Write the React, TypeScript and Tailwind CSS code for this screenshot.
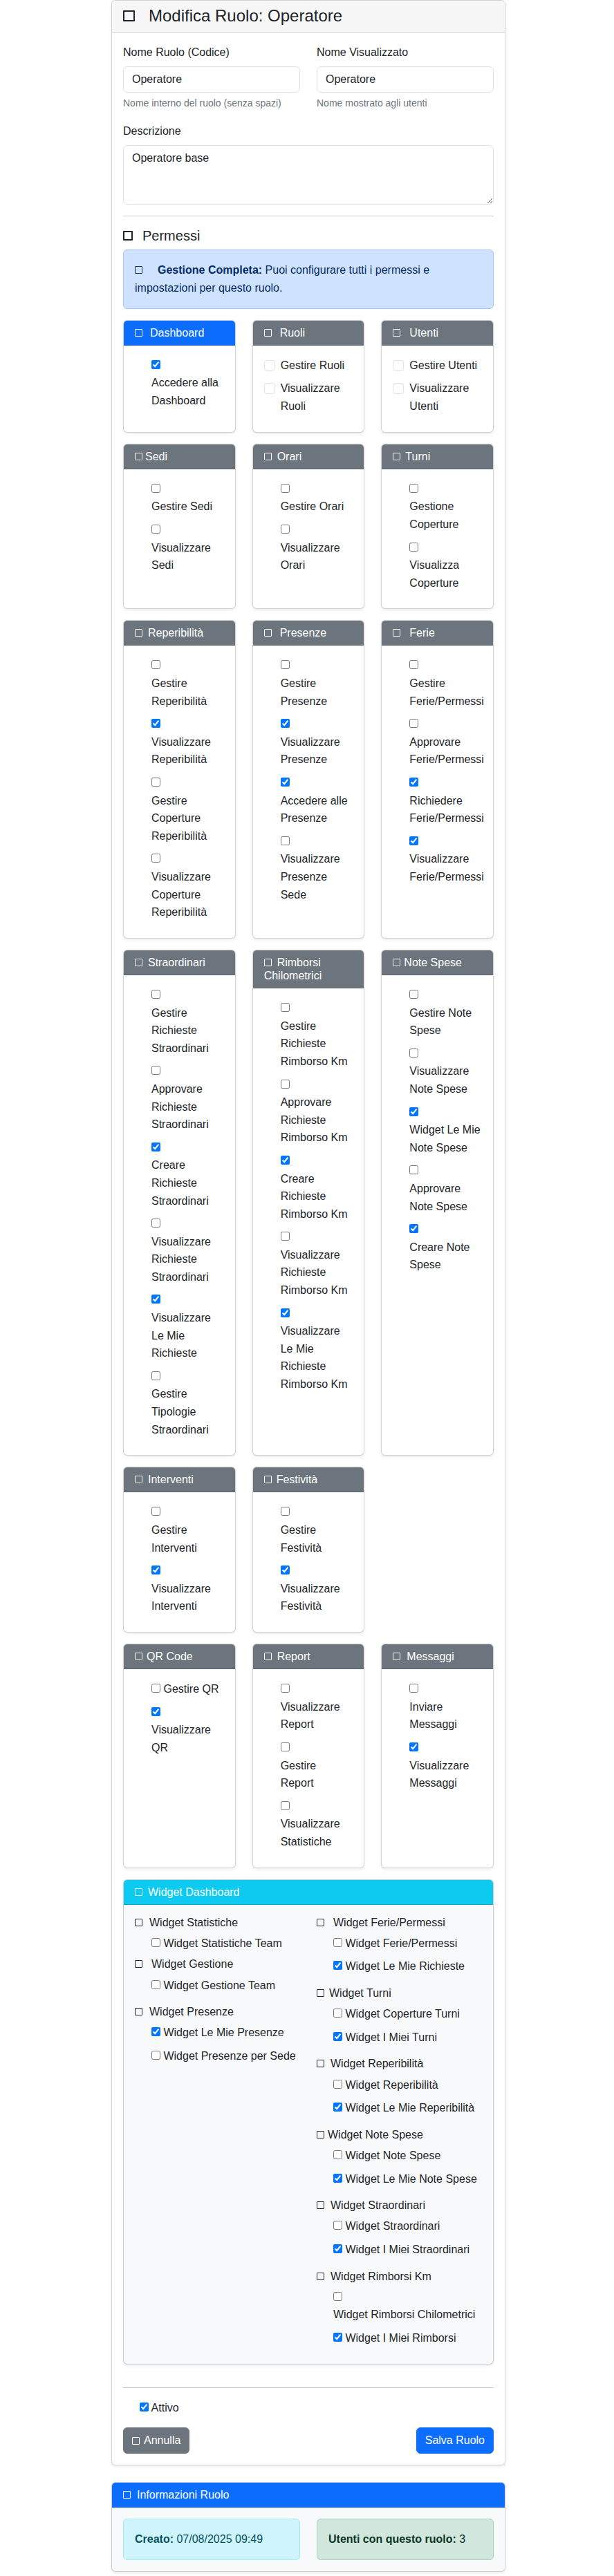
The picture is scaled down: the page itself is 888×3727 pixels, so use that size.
import React from 'react';

type Item = { label: string; checked?: boolean };
type PermCard = {
  title: string;
  gap: string;
  primary?: boolean;
  bs?: boolean;
  items: Item[];
};
type WidgetGroup = { title: string; gap: string; pb: string; items: Item[] };

const Tofu = ({ className = 'w-[11px] h-[11px] border-[1.5px]' }: { className?: string }) => (
  <span className={`inline-block border-current rounded-[1px] ${className}`} />
);

const cards: (PermCard | null)[] = [
  { title: 'Dashboard', gap: 'ml-[11px]', primary: true, items: [{ label: 'Accedere alla Dashboard', checked: true }] },
  { title: 'Ruoli', gap: 'ml-[12px]', bs: true, items: [{ label: 'Gestire Ruoli' }, { label: 'Visualizzare Ruoli' }] },
  { title: 'Utenti', gap: 'ml-[13px]', bs: true, items: [{ label: 'Gestire Utenti' }, { label: 'Visualizzare Utenti' }] },
  { title: 'Sedi', gap: 'ml-[4px]', items: [{ label: 'Gestire Sedi' }, { label: 'Visualizzare Sedi' }] },
  { title: 'Orari', gap: 'ml-[8px]', items: [{ label: 'Gestire Orari' }, { label: 'Visualizzare Orari' }] },
  { title: 'Turni', gap: 'ml-[7px]', items: [{ label: 'Gestione Coperture' }, { label: 'Visualizza Coperture' }] },
  {
    title: 'Reperibilità',
    gap: 'ml-[8px]',
    items: [
      { label: 'Gestire Reperibilità' },
      { label: 'Visualizzare Reperibilità', checked: true },
      { label: 'Gestire Coperture Reperibilità' },
      { label: 'Visualizzare Coperture Reperibilità' },
    ],
  },
  {
    title: 'Presenze',
    gap: 'ml-[12px]',
    items: [
      { label: 'Gestire Presenze' },
      { label: 'Visualizzare Presenze', checked: true },
      { label: 'Accedere alle Presenze', checked: true },
      { label: 'Visualizzare Presenze Sede' },
    ],
  },
  {
    title: 'Ferie',
    gap: 'ml-[13px]',
    items: [
      { label: 'Gestire Ferie/Permessi' },
      { label: 'Approvare Ferie/Permessi' },
      { label: 'Richiedere Ferie/Permessi', checked: true },
      { label: 'Visualizzare Ferie/Permessi', checked: true },
    ],
  },
  {
    title: 'Straordinari',
    gap: 'ml-[8px]',
    items: [
      { label: 'Gestire Richieste Straordinari' },
      { label: 'Approvare Richieste Straordinari' },
      { label: 'Creare Richieste Straordinari', checked: true },
      { label: 'Visualizzare Richieste Straordinari' },
      { label: 'Visualizzare Le Mie Richieste', checked: true },
      { label: 'Gestire Tipologie Straordinari' },
    ],
  },
  {
    title: 'Rimborsi Chilometrici',
    gap: 'ml-[8px]',
    items: [
      { label: 'Gestire Richieste Rimborso Km' },
      { label: 'Approvare Richieste Rimborso Km' },
      { label: 'Creare Richieste Rimborso Km', checked: true },
      { label: 'Visualizzare Richieste Rimborso Km' },
      { label: 'Visualizzare Le Mie Richieste Rimborso Km', checked: true },
    ],
  },
  {
    title: 'Note Spese',
    gap: 'ml-[5px]',
    items: [
      { label: 'Gestire Note Spese' },
      { label: 'Visualizzare Note Spese' },
      { label: 'Widget Le Mie Note Spese', checked: true },
      { label: 'Approvare Note Spese' },
      { label: 'Creare Note Spese', checked: true },
    ],
  },
  { title: 'Interventi', gap: 'ml-[8px]', items: [{ label: 'Gestire Interventi' }, { label: 'Visualizzare Interventi', checked: true }] },
  { title: 'Festività', gap: 'ml-[7px]', items: [{ label: 'Gestire Festività' }, { label: 'Visualizzare Festività', checked: true }] },
  null,
  { title: 'QR Code', gap: 'ml-[6px]', items: [{ label: 'Gestire QR' }, { label: 'Visualizzare QR', checked: true }] },
  {
    title: 'Report',
    gap: 'ml-[8px]',
    items: [{ label: 'Visualizzare Report' }, { label: 'Gestire Report' }, { label: 'Visualizzare Statistiche' }],
  },
  { title: 'Messaggi', gap: 'ml-[9px]', items: [{ label: 'Inviare Messaggi' }, { label: 'Visualizzare Messaggi', checked: true }] },
];

const widgetLeft: WidgetGroup[] = [
  { title: 'Widget Statistiche', gap: 'ml-[10px]', pb: '', items: [{ label: 'Widget Statistiche Team' }] },
  { title: 'Widget Gestione', gap: 'ml-[13px]', pb: 'pb-2', items: [{ label: 'Widget Gestione Team' }] },
  {
    title: 'Widget Presenze',
    gap: 'ml-[10px]',
    pb: '',
    items: [{ label: 'Widget Le Mie Presenze', checked: true }, { label: 'Widget Presenze per Sede' }],
  },
];

const widgetRight: WidgetGroup[] = [
  {
    title: 'Widget Ferie/Permessi',
    gap: 'ml-[13px]',
    pb: 'pb-2',
    items: [{ label: 'Widget Ferie/Permessi' }, { label: 'Widget Le Mie Richieste', checked: true }],
  },
  {
    title: 'Widget Turni',
    gap: 'ml-[7px]',
    pb: 'pb-2',
    items: [{ label: 'Widget Coperture Turni' }, { label: 'Widget I Miei Turni', checked: true }],
  },
  {
    title: 'Widget Reperibilità',
    gap: 'ml-[9px]',
    pb: 'pb-2',
    items: [{ label: 'Widget Reperibilità' }, { label: 'Widget Le Mie Reperibilità', checked: true }],
  },
  {
    title: 'Widget Note Spese',
    gap: 'ml-[5px]',
    pb: 'pb-2',
    items: [{ label: 'Widget Note Spese' }, { label: 'Widget Le Mie Note Spese', checked: true }],
  },
  {
    title: 'Widget Straordinari',
    gap: 'ml-[9px]',
    pb: 'pb-2',
    items: [{ label: 'Widget Straordinari' }, { label: 'Widget I Miei Straordinari', checked: true }],
  },
  {
    title: 'Widget Rimborsi Km',
    gap: 'ml-[9px]',
    pb: '',
    items: [{ label: 'Widget Rimborsi Chilometrici' }, { label: 'Widget I Miei Rimborsi', checked: true }],
  },
];

// native checkbox + label that drops to the next line when it does not fit
const NativeCheck = ({ item, tight }: { item: Item; tight?: boolean }) => (
  <div className={`mb-2 pl-6 ${tight ? 'pr-[1.5px]' : ''}`}>
    <input type="checkbox" defaultChecked={item.checked} className="m-0 h-[13px] w-[13px]" />{' '}
    <label className="inline-block">{item.label}</label>
  </div>
);

// bootstrap styled check (Ruoli / Utenti)
const BsCheck = ({ item }: { item: Item }) => (
  <div className="mb-2 flex">
    <span className="mt-[5px] h-4 w-4 shrink-0 rounded-[4px] border border-[#dee2e6] bg-white" />
    <label className="ml-2">{item.label}</label>
  </div>
);

function PermissionCard({ card }: { card: PermCard }) {
  return (
    <div className="flex flex-col overflow-hidden rounded-md border border-[rgba(0,0,0,0.175)] bg-white shadow-[0_2px_4px_rgba(0,0,0,0.075)]">
      <div
        className={`border-b border-[rgba(0,0,0,0.175)] px-4 py-2 font-medium leading-[1.2] text-white ${
          card.primary ? 'bg-[#0d6efd]' : 'bg-[#6c757d]'
        }`}
      >
        <Tofu />
        <span className={card.gap}>{card.title}</span>
      </div>
      <div className="flex-1 p-4">
        {card.items.map((it) =>
          card.bs ? <BsCheck key={it.label} item={it} /> : <NativeCheck key={it.label} item={it} tight />
        )}
      </div>
    </div>
  );
}

function WidgetColumn({ groups }: { groups: WidgetGroup[] }) {
  return (
    <div>
      {groups.map((g) => (
        <div key={g.title} className={g.pb}>
          <h6 className="mb-2 font-medium leading-[1.2]">
            <Tofu />
            <span className={g.gap}>{g.title}</span>
          </h6>
          {g.items.map((it) => (
            <NativeCheck key={it.label} item={it} />
          ))}
        </div>
      ))}
    </div>
  );
}

export default function App() {
  return (
    <div className="min-h-screen bg-white pb-2 font-['Liberation_Sans',Arial,sans-serif] text-[16px] leading-[1.6] text-[#212529]">
      <div className="ml-[161px] w-[570px]">
        <div className="rounded-md border border-[rgba(0,0,0,0.175)] bg-white shadow-[0_2px_4px_rgba(0,0,0,0.075)]">
          <div className="rounded-t-[5px] border-b border-[rgba(0,0,0,0.175)] bg-[#f7f7f8] px-4 py-2">
            <h4 className="text-[24px] font-medium leading-[1.2]">
              <Tofu className="h-[16px] w-[17px] border-2" />
              <span className="ml-[20px]">Modifica Ruolo: Operatore</span>
            </h4>
          </div>

          <div className="p-4">
            <div className="mb-4 grid grid-cols-2 gap-x-6">
              <div>
                <label className="mb-2 block">Nome Ruolo (Codice)</label>
                <input
                  type="text"
                  defaultValue="Operatore"
                  className="block h-[38px] w-full rounded-md border border-[#dee2e6] bg-white px-3 py-1.5 leading-[1.5]"
                />
                <div className="mt-1 text-[14px] text-[#6c757d]">Nome interno del ruolo (senza spazi)</div>
              </div>
              <div>
                <label className="mb-2 block">Nome Visualizzato</label>
                <input
                  type="text"
                  defaultValue="Operatore"
                  className="block h-[38px] w-full rounded-md border border-[#dee2e6] bg-white px-3 py-1.5 leading-[1.5]"
                />
                <div className="mt-1 text-[14px] text-[#6c757d]">Nome mostrato agli utenti</div>
              </div>
            </div>

            <div className="mb-4">
              <label className="mb-2 block">Descrizione</label>
              <textarea
                rows={3}
                defaultValue="Operatore base"
                className="block h-[86px] w-full rounded-md border border-[#dee2e6] bg-white px-3 py-1.5 leading-[1.5]"
              />
            </div>

            <hr className="mb-4 border-t border-[#c8c9ca]" />

            <h5 className="mb-2 text-[20px] font-medium leading-[1.2]">
              <Tofu className="h-[14px] w-[14px] border-2" />
              <span className="ml-[14px]">Permessi</span>
            </h5>

            <div className="mb-4 rounded-md border border-[#9ec5fe] bg-[#cfe2ff] p-4 text-[#052c65]">
              <Tofu className="mr-[22px] h-[11px] w-[11px] border-[1.5px]" />
              <strong className="font-bold">Gestione Completa:</strong> Puoi configurare tutti i permessi e impostazioni per
              questo ruolo.
            </div>

            <div className="grid grid-cols-3 gap-x-6 gap-y-4">
              {cards.map((c, i) => (c ? <PermissionCard key={c.title} card={c} /> : <div key={`empty-${i}`} />))}
            </div>

            <div className="mt-4 overflow-hidden rounded-md border border-[rgba(0,0,0,0.175)] bg-[#f8f9fa] shadow-[0_2px_4px_rgba(0,0,0,0.075)]">
              <div className="border-b border-[rgba(0,0,0,0.175)] bg-[#0dcaf0] px-4 py-2 font-medium leading-[1.2] text-white">
                <Tofu />
                <span className="ml-[8px]">Widget Dashboard</span>
              </div>
              <div className="grid grid-cols-2 gap-x-6 p-4">
                <WidgetColumn groups={widgetLeft} />
                <WidgetColumn groups={widgetRight} />
              </div>
            </div>

            <hr className="mb-4 mt-[33px] border-t border-[#c8c9ca]" />

            <div className="mb-4 pl-6">
              <input type="checkbox" defaultChecked className="m-0 h-[13px] w-[13px]" /> <label>Attivo</label>
            </div>

            <div className="flex items-center justify-between">
              <button
                type="button"
                className="flex h-[38px] items-center rounded-md border border-[#6c757d] bg-[#6c757d] px-3 leading-[1.5] text-white"
              >
                <Tofu />
                <span className="ml-[6px]">Annulla</span>
              </button>
              <button
                type="button"
                className="h-[38px] rounded-md border border-[#0d6efd] bg-[#0d6efd] px-3 leading-[1.5] text-white"
              >
                Salva Ruolo
              </button>
            </div>
          </div>
        </div>

        <div className="mt-6 overflow-hidden rounded-md border border-[rgba(0,0,0,0.175)] bg-[#f8f9fa] shadow-[0_2px_4px_rgba(0,0,0,0.075)]">
          <div className="border-b border-[rgba(0,0,0,0.175)] bg-[#0d6efd] px-4 py-2 font-medium leading-[1.2] text-white">
            <Tofu />
            <span className="ml-[9px]">Informazioni Ruolo</span>
          </div>
          <div className="grid grid-cols-2 gap-x-6 p-4">
            <div className="rounded-md border border-[#9eeaf9] bg-[#cff4fc] p-4 text-[#055160]">
              <strong className="font-bold">Creato:</strong> 07/08/2025 09:49
            </div>
            <div className="rounded-md border border-[#a3cfbb] bg-[#d1e7dd] p-4 text-[#0a3622]">
              <strong className="font-bold">Utenti con questo ruolo:</strong> 3
            </div>
          </div>
        </div>
      </div>
    </div>
  );
}
